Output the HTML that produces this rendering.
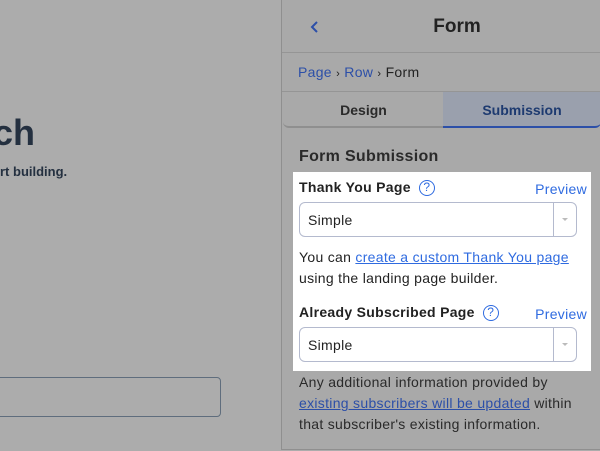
<!DOCTYPE html>
<html><head><style>
*{margin:0;padding:0;box-sizing:border-box}
body{width:600px;height:451px;background:#acacac;font-family:"Liberation Sans",sans-serif;position:relative;overflow:hidden;color:#222}
.a{position:absolute}
.panel{left:281px;top:0;width:319px;height:450px;background:#a9a9a9;border-left:1px solid #8f8f8f;border-bottom:1px solid #8f8f8f}
.lk{color:#2c4fa8}
.sel{position:absolute;left:6px;width:278px;height:35px;border:1px solid #b4bace;border-radius:6px;background:#fff;font-size:14px;padding:9px 0 0 8px;letter-spacing:0.3px}
.sel:after{content:"";position:absolute;right:0;top:0;width:22px;height:33px;border-left:1px solid #b4bace}
.sel i{position:absolute;right:8px;top:15px;border:3px solid transparent;border-top:3px solid #bbb}
.q{display:inline-block;width:16px;height:16px;border:1.5px solid #2f6be0;border-radius:50%;color:#2f6be0;font-size:12px;text-align:center;line-height:13px;font-weight:normal;vertical-align:1px;margin-left:8px}
.t{letter-spacing:0.3px}
</style></head><body>
<div class="a" style="left:-7px;top:112px;font-size:36px;font-weight:bold;color:#243040">ch</div>
<div class="a" style="left:0;top:164px;font-size:13px;font-weight:bold;color:#243040">rt building.</div>
<div class="a" style="left:-10px;top:377px;width:231px;height:40px;border:1px solid #5f6d7d;border-radius:4px"></div>
<div class="a panel">
 <svg class="a" style="left:28px;top:20px" width="10" height="14" viewBox="0 0 10 14"><path d="M7 2 L2 7 L7 12" fill="none" stroke="#2c4fa8" stroke-width="2"/></svg>
 <div class="a" style="left:0;width:350px;top:16px;text-align:center;font-size:19px;font-weight:bold;color:#222">Form</div>
 <div class="a" style="left:0;top:52px;width:319px;border-top:1px solid #959595"></div>
 <div class="a t" style="left:16px;top:64px;font-size:14px"><span class="lk">Page</span> <span style="font-size:11px">›</span> <span class="lk">Row</span> <span style="font-size:11px">›</span> Form</div>
 <div class="a" style="left:0;top:91px;width:319px;border-top:1px solid #959595"></div>
 <div class="a" style="left:1px;top:92px;width:161px;height:36px;border-bottom:2px solid #8f8f8f;border-radius:0 0 0 6px;text-align:center;font-size:14px;font-weight:bold;padding-top:10px;color:#2a2a2a">Design</div>
 <div class="a" style="left:161px;top:92px;width:158px;height:36px;background:#9aa0ad;border-bottom:2px solid #2c4fa8;border-radius:0 0 6px 0;text-align:center;font-size:14px;font-weight:bold;padding-top:10px;color:#1d3a70">Submission</div>
 <div class="a t" style="left:17px;top:148px;font-size:16px;font-weight:bold;color:#2a2a2a">Form Submission</div>
 <div class="a" style="left:11px;top:172px;width:298px;height:199px;background:#fff">
  <div class="a t" style="left:6px;top:7px;font-size:14px;font-weight:bold">Thank You Page<span class="q">?</span></div>
  <div class="a t" style="right:4px;top:9px;font-size:14px;color:#2f6be0">Preview</div>
  <div class="sel" style="top:30px">Simple<i></i></div>
  <div class="a t" style="left:6px;top:75px;font-size:14px;line-height:21px">You can <span style="color:#2f6be0;text-decoration:underline">create a custom Thank You page</span><br>using the landing page builder.</div>
  <div class="a t" style="left:6px;top:132px;font-size:14px;font-weight:bold">Already Subscribed Page<span class="q">?</span></div>
  <div class="a t" style="right:4px;top:134px;font-size:14px;color:#2f6be0">Preview</div>
  <div class="sel" style="top:155px">Simple<i></i></div>
 </div>
 <div class="a t" style="left:17px;top:372px;font-size:14px;line-height:21px;color:#2a2a2a">Any additional information provided by<br><span class="lk" style="text-decoration:underline">existing subscribers will be updated</span> within<br>that subscriber's existing information.</div>
</div>
</body></html>
